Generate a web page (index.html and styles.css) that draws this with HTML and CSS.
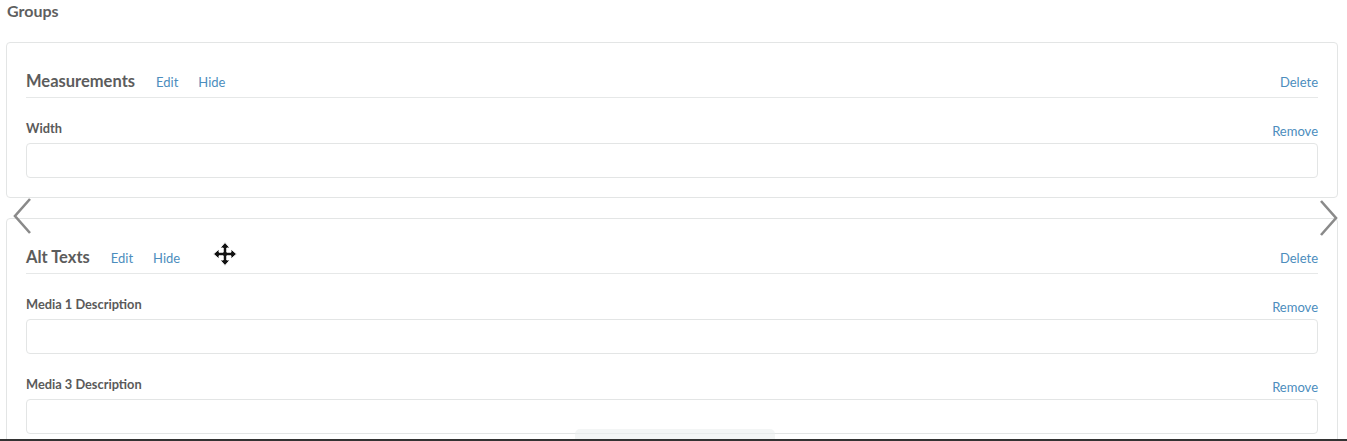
FILE: index.html
```html
<!DOCTYPE html>
<html>

<head>
    <link rel="stylesheet" href="styles.css">
</head>

<body>
    <h2 class='section-title'>Groups</h2>

    <div class='group-list'>
        <div class='group-card'>
            <div class='group-header'>
                <span class='group-name'>Measurements</span>
                <a class='link'>Edit</a>
                <a class='link'>Hide</a>
                <a class='link link-right'>Delete</a>
            </div>
            <div class='field'>
                <div class='field-top'>
                    <span class='field-label'>Width</span>
                    <a class='link link-remove'>Remove</a>
                </div>
                <input class='field-input' type='text'>
            </div>
        </div>

        <div class='group-card'>
            <div class='group-header'>
                <span class='group-name'>Alt Texts</span>
                <a class='link'>Edit</a>
                <a class='link'>Hide</a>
                <a class='link link-right'>Delete</a>
            </div>
            <div class='field'>
                <div class='field-top'>
                    <span class='field-label'>Media 1 Description</span>
                    <a class='link link-remove'>Remove</a>
                </div>
                <input class='field-input' type='text'>
            </div>
            <div class='field'>
                <div class='field-top'>
                    <span class='field-label'>Media 3 Description</span>
                    <a class='link link-remove'>Remove</a>
                </div>
                <input class='field-input' type='text'>
            </div>
        </div>
    </div>

    <!-- carousel arrows -->
    <svg class='arrow arrow-left' width='22' height='38' viewBox='0 0 22 38'>
        <polyline points='18,2 3,19 18,36' fill='none' stroke='#8a8a8a' stroke-width='2.6' />
    </svg>
    <svg class='arrow arrow-right' width='22' height='38' viewBox='0 0 22 38'>
        <polyline points='4,2 19,19 4,36' fill='none' stroke='#8a8a8a' stroke-width='2.6' />
    </svg>

    <!-- move cursor -->
    <svg class='move-cursor' width='24' height='24' viewBox='0 0 24 24'>
        <path d='M12 0.5 L17 6 L13.8 6 L13.8 10.2 L18 10.2 L18 7 L23.5 12 L18 17 L18 13.8 L13.8 13.8 L13.8 18 L17 18 L12 23.5 L7 18 L10.2 18 L10.2 13.8 L6 13.8 L6 17 L0.5 12 L6 7 L6 10.2 L10.2 10.2 L10.2 6 L7 6 Z'
            fill='#111' stroke='#fff' stroke-width='1' stroke-linejoin='round' />
    </svg>

    <div class='bottom-tab'></div>
    <div class='bottom-line'></div>
</body>

</html>
```

FILE: styles.css
```css
html,
body {
    height: 100%;
    overflow: hidden;
}

body {
    font-family: "Source Sans Pro", Lato, "Liberation Sans", sans-serif;
    background: #fff;
    color: #555;
    margin: 0;
    padding: 0 9px 0 6px;
}

.section-title {
    font-size: 16px;
    font-weight: bold;
    color: #5f5f5f;
    margin: 2px 0 0 1px;
    line-height: 18px;
    height: 40px;
}

.group-card {
    border: 1px solid #e3e5e5;
    border-radius: 4px;
    padding: 0 19px 19px;
    margin-bottom: 20px;
}

.group-header {
    display: flex;
    align-items: baseline;
    padding: 28px 0 5px;
    line-height: 20px;
    border-bottom: 1px solid #e6e8e8;
}

.group-name {
    font-size: 16.5px;
    font-weight: bold;
    color: #5c5c5c;
    margin-right: 21px;
}

.link {
    font-size: 13px;
    color: #4c8dbd;
    margin-right: 20px;
    cursor: pointer;
}

.link-right {
    margin-left: auto;
    margin-right: 0;
}

.field {
    margin-top: 22px;
}

.field-top {
    display: flex;
    justify-content: space-between;
    align-items: flex-start;
    line-height: 16px;
    margin-bottom: 7px;
}

.field-label {
    font-size: 12.8px;
    font-weight: bold;
    color: #5a5a5a;
}

.link-remove {
    margin-right: 0;
    position: relative;
    top: 3px;
}

.field-input {
    display: block;
    box-sizing: border-box;
    width: 100%;
    height: 35px;
    margin: 0;
    border: 1px solid #e3e5e5;
    border-radius: 4px;
    background: #fff;
}

.arrow {
    position: absolute;
    top: 197px;
}

.arrow-left {
    left: 12px;
}

.arrow-right {
    left: 1317px;
    top: 199px;
}

.move-cursor {
    position: absolute;
    left: 213px;
    top: 242px;
}

.bottom-tab {
    position: fixed;
    left: 575px;
    bottom: 0;
    width: 200px;
    height: 12px;
    background: rgba(235, 238, 238, 0.6);
    border-radius: 5px 5px 0 0;
}

.bottom-line {
    position: fixed;
    left: 0;
    right: 0;
    bottom: 0;
    height: 2px;
    background: #333;
}
```
